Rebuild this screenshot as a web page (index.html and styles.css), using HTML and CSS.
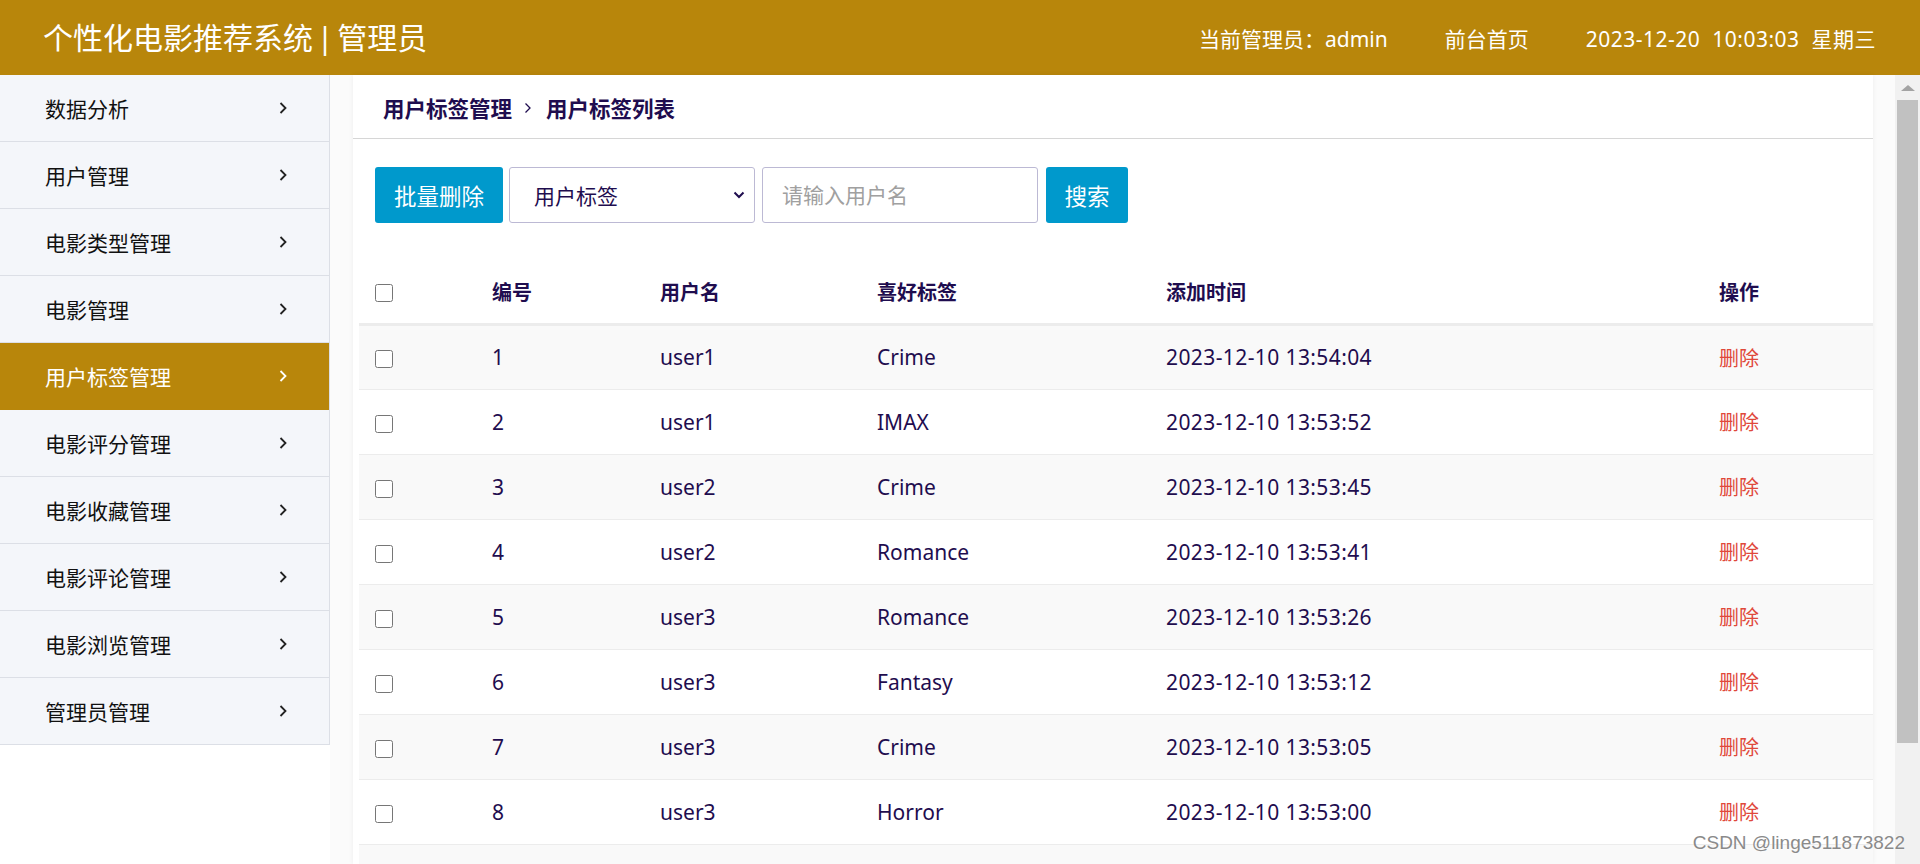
FILE: index.html
```html
<!DOCTYPE html>
<html lang="zh-CN">
<head>
<meta charset="utf-8">
<title>个性化电影推荐系统 | 管理员</title>
<link rel="stylesheet" href="styles.css">
</head>
<body>
<header class="topbar">
  <div class="brand">个性化电影推荐系统 | 管理员</div>
  <div class="top-info">
    <span class="top-item">当前管理员：admin</span>
    <span class="top-item">前台首页</span>
    <span class="top-item top-date">2023-12-20&nbsp;&nbsp;10:03:03&nbsp;&nbsp;星期三</span>
  </div>
</header>
<div class="layout">
  <nav class="sidebar">
    <ul class="menu">
      <li class="menu-item"><span>数据分析</span><svg class="chev" viewBox="0 0 8 12" width="8" height="12"><polyline points="1.5,1 6.5,6 1.5,11" /></svg></li>
      <li class="menu-item"><span>用户管理</span><svg class="chev" viewBox="0 0 8 12" width="8" height="12"><polyline points="1.5,1 6.5,6 1.5,11" /></svg></li>
      <li class="menu-item"><span>电影类型管理</span><svg class="chev" viewBox="0 0 8 12" width="8" height="12"><polyline points="1.5,1 6.5,6 1.5,11" /></svg></li>
      <li class="menu-item"><span>电影管理</span><svg class="chev" viewBox="0 0 8 12" width="8" height="12"><polyline points="1.5,1 6.5,6 1.5,11" /></svg></li>
      <li class="menu-item active"><span>用户标签管理</span><svg class="chev" viewBox="0 0 8 12" width="8" height="12"><polyline points="1.5,1 6.5,6 1.5,11" /></svg></li>
      <li class="menu-item"><span>电影评分管理</span><svg class="chev" viewBox="0 0 8 12" width="8" height="12"><polyline points="1.5,1 6.5,6 1.5,11" /></svg></li>
      <li class="menu-item"><span>电影收藏管理</span><svg class="chev" viewBox="0 0 8 12" width="8" height="12"><polyline points="1.5,1 6.5,6 1.5,11" /></svg></li>
      <li class="menu-item"><span>电影评论管理</span><svg class="chev" viewBox="0 0 8 12" width="8" height="12"><polyline points="1.5,1 6.5,6 1.5,11" /></svg></li>
      <li class="menu-item"><span>电影浏览管理</span><svg class="chev" viewBox="0 0 8 12" width="8" height="12"><polyline points="1.5,1 6.5,6 1.5,11" /></svg></li>
      <li class="menu-item"><span>管理员管理</span><svg class="chev" viewBox="0 0 8 12" width="8" height="12"><polyline points="1.5,1 6.5,6 1.5,11" /></svg></li>
    </ul>
  </nav>
  <main class="main">
    <section class="card">
      <div class="crumbs">
        <span>用户标签管理</span>
        <svg class="crumb-sep" viewBox="0 0 8 12" width="8" height="12"><polyline points="1.5,1.5 6,6 1.5,10.5" /></svg>
        <span>用户标签列表</span>
      </div>
      <div class="toolbar">
        <button class="btn btn-batch" type="button">批量删除</button>
        <div class="fake-select">
          <span>用户标签</span>
          <svg class="select-arrow" viewBox="0 0 12 8" width="12" height="8"><polyline points="1.5,1.5 6,6 10.5,1.5" /></svg>
        </div>
        <input class="search-input" type="text" placeholder="请输入用户名">
        <button class="btn btn-search" type="button">搜索</button>
      </div>
      <table class="grid">
        <colgroup>
          <col class="c-check"><col class="c-id"><col class="c-user"><col class="c-tag"><col class="c-time"><col class="c-op">
        </colgroup>
        <thead>
          <tr><th class="cell-check"><input type="checkbox" class="chk"></th><th>编号</th><th>用户名</th><th>喜好标签</th><th>添加时间</th><th>操作</th></tr>
        </thead>
        <tbody>
          <tr><td class="cell-check"><input type="checkbox" class="chk"></td><td>1</td><td>user1</td><td>Crime</td><td class="time">2023-12-10 13:54:04</td><td class="del">删除</td></tr>
          <tr><td class="cell-check"><input type="checkbox" class="chk"></td><td>2</td><td>user1</td><td>IMAX</td><td class="time">2023-12-10 13:53:52</td><td class="del">删除</td></tr>
          <tr><td class="cell-check"><input type="checkbox" class="chk"></td><td>3</td><td>user2</td><td>Crime</td><td class="time">2023-12-10 13:53:45</td><td class="del">删除</td></tr>
          <tr><td class="cell-check"><input type="checkbox" class="chk"></td><td>4</td><td>user2</td><td>Romance</td><td class="time">2023-12-10 13:53:41</td><td class="del">删除</td></tr>
          <tr><td class="cell-check"><input type="checkbox" class="chk"></td><td>5</td><td>user3</td><td>Romance</td><td class="time">2023-12-10 13:53:26</td><td class="del">删除</td></tr>
          <tr><td class="cell-check"><input type="checkbox" class="chk"></td><td>6</td><td>user3</td><td>Fantasy</td><td class="time">2023-12-10 13:53:12</td><td class="del">删除</td></tr>
          <tr><td class="cell-check"><input type="checkbox" class="chk"></td><td>7</td><td>user3</td><td>Crime</td><td class="time">2023-12-10 13:53:05</td><td class="del">删除</td></tr>
          <tr><td class="cell-check"><input type="checkbox" class="chk"></td><td>8</td><td>user3</td><td>Horror</td><td class="time">2023-12-10 13:53:00</td><td class="del">删除</td></tr>
          <tr class="row-cut"><td></td><td></td><td></td><td></td><td></td><td></td></tr>
        </tbody>
      </table>
    </section>
  </main>
  <div class="scrollbar">
    <div class="scroll-up"></div>
    <div class="scroll-thumb"></div>
  </div>
</div>
<div class="watermark">CSDN @linge511873822</div>
</body>
</html>
```
FILE: styles.css
```css
* { box-sizing: border-box; }
html, body {
  margin: 0;
  padding: 0;
  height: 864px;
  overflow: hidden;
}
body {
  font-family: "Noto Sans", "Noto Sans CJK SC", sans-serif;
  color: #1f0d4f;
  background: #ffffff;
  position: relative;
}
.topbar {
  height: 75px;
  background: #b8860b;
  color: #ffffff;
  display: flex;
  align-items: center;
  justify-content: space-between;
  padding: 0 44px 0 43px;
}
.brand {
  font-size: 30px;
  line-height: 1;
  word-spacing: -4px;
}
.top-info {
  display: flex;
  align-items: center;
  gap: 57px;
  font-size: 21px;
}
.top-item { white-space: nowrap; }
.top-date { letter-spacing: 0.5px; }

.layout {
  display: flex;
  height: 789px;
}
.sidebar {
  width: 330px;
  flex: none;
  align-self: flex-start;
}
.menu {
  list-style: none;
  margin: 0;
  padding: 0;
  background: #f4f6fa;
  border-right: 1px solid #dcdfe6;
}
.menu-item {
  height: 67px;
  border-bottom: 1px solid #dcdfe6;
  display: flex;
  align-items: center;
  justify-content: space-between;
  padding: 0 42px 0 45px;
  font-size: 21px;
  color: #111111;
}
.menu-item.active {
  background: #b8860b;
  color: #ffffff;
  border-bottom-color: #b8860b;
}
.chev polyline {
  fill: none;
  stroke: #222222;
  stroke-width: 1.8;
}
.menu-item.active .chev polyline { stroke: #ffffff; }

.main {
  flex: 1;
  background: #fbfbfb;
  padding: 0 22px 0 23px;
  min-width: 0;
}
.card {
  background: #ffffff;
  height: 100%;
  box-shadow: 0 0 5px rgba(0, 0, 0, 0.06);
}
.crumbs {
  height: 64px;
  padding: 2px 0 0 30px;
  display: flex;
  align-items: center;
  border-bottom: 1px solid #d6d6d6;
  font-size: 21.5px;
  font-weight: 700;
  color: #1f0d4f;
}
.crumb-sep {
  margin: 0 14px 0 12px;
}
.crumb-sep polyline {
  fill: none;
  stroke: #1f0d4f;
  stroke-width: 1.3;
}
.toolbar {
  display: flex;
  align-items: center;
  padding: 28px 0 0 22px;
}
.btn {
  height: 56px;
  border: none;
  border-radius: 3px;
  background: #0099cc;
  color: #ffffff;
  font-family: "Noto Sans", "Noto Sans CJK SC", sans-serif;
  font-size: 22.5px;
  padding: 0;
}
.btn-batch { width: 128px; }
.btn-search { width: 82px; margin-left: 8px; }
.fake-select {
  margin-left: 6px;
  width: 246px;
  height: 56px;
  border: 1px solid #bcb9d4;
  border-radius: 3px;
  display: flex;
  align-items: center;
  justify-content: space-between;
  padding: 0 9px 0 24px;
  font-size: 21px;
  color: #1f0d4f;
}
.select-arrow polyline {
  fill: none;
  stroke: #1f0d4f;
  stroke-width: 2;
}
.search-input {
  margin-left: 7px;
  width: 276px;
  height: 56px;
  border: 1px solid #bcb9d4;
  border-radius: 3px;
  padding: 0 0 0 19px;
  font-family: "Noto Sans", "Noto Sans CJK SC", sans-serif;
  font-size: 21px;
  color: #1f0d4f;
  outline: none;
}
.search-input::placeholder { color: #a0a0a0; }

.grid {
  margin: 37px 0 0 6px;
  width: 1514px;
  border-collapse: collapse;
  table-layout: fixed;
  font-size: 21px;
  color: #1f0d4f;
}
.c-check { width: 133px; }
.c-id { width: 168px; }
.c-user { width: 217px; }
.c-tag { width: 289px; }
.c-time { width: 553px; }
.c-op { width: 154px; }
.grid th, .grid td {
  text-align: left;
  padding: 0;
  white-space: nowrap;
}
.grid th {
  height: 64px;
  font-size: 20px;
  font-weight: 700;
  border-bottom: 3px solid #ececec;
}
.grid td {
  height: 65px;
  border-bottom: 1px solid #ececec;
}
.grid tbody tr:nth-child(odd) { background: #f9f9f9; }
.cell-check { padding-left: 16px !important; }
.chk {
  width: 18px;
  height: 18px;
  margin: 0;
  vertical-align: middle;
}
.time { letter-spacing: 0.4px; }
.del { color: #e0483a; font-size: 20px; }

.scrollbar {
  width: 25px;
  flex: none;
  background: #f1f1f1;
  display: flex;
  flex-direction: column;
  align-items: center;
}
.scroll-up {
  width: 0;
  height: 0;
  margin-top: 10px;
  border-left: 7px solid transparent;
  border-right: 7px solid transparent;
  border-bottom: 6px solid #a3a3a3;
}
.scroll-thumb {
  margin-top: 9px;
  width: 21px;
  height: 643px;
  background: #c1c1c1;
}
.watermark {
  position: absolute;
  right: 15px;
  bottom: 10px;
  font-family: "Liberation Sans", sans-serif;
  font-size: 19px;
  color: #8a8a8a;
  text-shadow: 0 0 2px #ffffff;
}
```
